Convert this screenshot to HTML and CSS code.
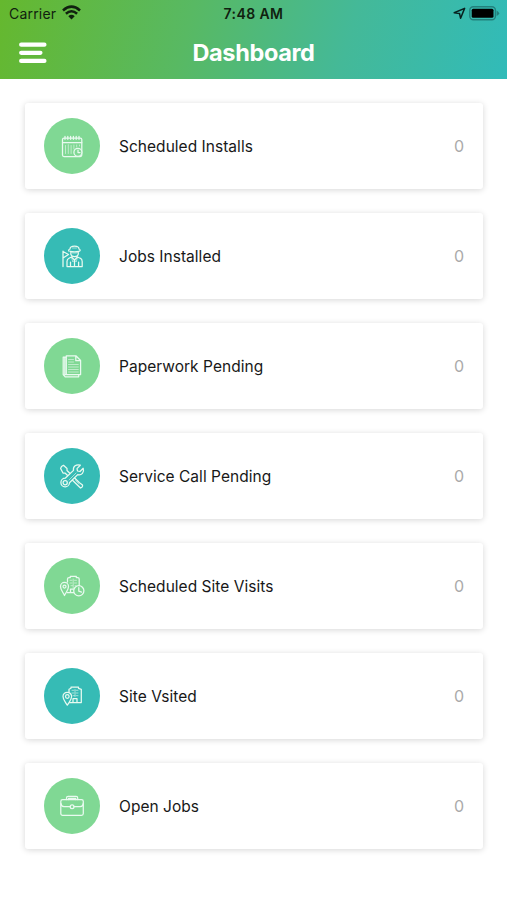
FILE: index.html
```html
<!DOCTYPE html>
<html lang="en">
<head>
<meta charset="utf-8">
<title>Dashboard</title>
<link rel="stylesheet" href="styles.css">
</head>
<body>
<header class="header">
  <div class="status">
    <div class="carrier"><span>Carrier</span>
      <svg width="19" height="15" viewBox="0 0 19 15"><g fill="none" stroke="#10210f" stroke-width="2.6"><path d="M1 5.400Q9.500-2 18 5.400"/><path d="M3.900 8.700q5.600-4.900 11.200 0"/></g><path d="M6.300 11.200q3.200-2.700 6.400 0L9.500 14.400z" fill="#10210f"/></svg>
    </div>
    <div class="time">7:48 AM</div>
    <div class="indicators">
      <svg width="13" height="13" viewBox="0 0 13 13"><path d="M1.200 5.800 11.600 1.400 7.600 11.300 6.500 6.400z" fill="none" stroke="#08211f" stroke-width="1.500" stroke-linejoin="round"/></svg>
      <svg width="31" height="15" viewBox="0 0 31 15"><rect x=".8" y=".8" width="25.600" height="13" rx="3.500" fill="none" stroke="#23817d" stroke-width="1.400"/><rect x="2.700" y="2.800" width="21.800" height="9" rx="1.500" fill="#000"/><path d="M27.600 4.500q5 2.800 0 5.600z" fill="#23817d"/></svg>
    </div>
  </div>
  <div class="titlebar">
    <svg class="menu" width="28" height="22" viewBox="0 0 28 22"><path d="M2.200 2.700h23.200M2.200 10.800h19.200M2.200 18.900h23.200" stroke="#fff" stroke-width="4.300" stroke-linecap="round"/></svg>
    <h1>Dashboard</h1>
  </div>
</header>
<main class="list">
  <section class="card"><div class="icon green"><svg viewBox="0 0 28 28"><rect x="4.500" y="6" width="19.300" height="18.500" rx="1.500"/><path d="M4.500 10.700h19.300M7 4.300v3M9.800 4.300v3M12.600 4.300v3M15.400 4.300v3M18.200 4.300v3M21 4.300v3"/><path class="fine" d="M7.500 13.500v8M10.300 12.700v8.800M13.100 13.500v8M15.900 13v4M18.700 13v2M21.500 13v1"/><circle class="green-fill" cx="19.900" cy="20.300" r="4"/><path d="M20 18v2.500h2"/></svg></div><span class="label">Scheduled Installs</span><span class="count">0</span></section>
  <section class="card"><div class="icon teal"><svg viewBox="0 0 28 28"><path d="M5 9v15.500M5 9.500l5.500 3L5 16M10.800 9q-.5-1.500 1.200-2c0-4 9-4 9 0 1.700.5 1.500 2 0 2.300q-4.500 1-9 0M12.800 9.500v2c0 4 7.500 4 7.500 0v-2M13.500 15l-2.500 1.200q-2 1-2 3v5.300h15.200v-5q0-2.500-2-3.300L19.500 15M13.500 15l3 3 3-3M12.500 24.500V20M20.600 24.500V20M16.500 18v6.500"/><path class="fine" d="M14.500 11h4M14.500 6h4M13.500 15l1.300 5 1.700-2 1.700 2 1.300-5"/></svg></div><span class="label">Jobs Installed</span><span class="count">0</span></section>
  <section class="card"><div class="icon green"><svg viewBox="0 0 28 28"><path d="M8.300 3.800h9.600l4.700 4.700v14H8.300zM17.800 3.800v4.900h4.800M8 5H5.200v17.500l2 2.300h13.500v-2.300M6.800 5v17.500h1.500"/><path class="fine" d="M10.500 7.500h5M10.500 10h5M10.500 12.500h9.800M10.500 15h9.800M10.500 17.500h9.800M10.500 20h9.800"/></svg></div><span class="label">Paperwork Pending</span><span class="count">0</span></section>
  <section class="card"><div class="icon teal"><svg viewBox="0 0 28 28"><path d="M3.500 4.500 5.500 3.300 9 6.500v2l12.500 12.300 3 2.200q.5 2.200-2 3L7 11H5L2.600 6.500z"/><path class="teal-fill" d="M22.300 3.200 19 6.600l.5 2.400 2.500.5 3.200-3.200c1.300 4-1.500 7.200-5.500 6.300l-8.200 8.100a4.300 4.300 0 1 1-4.300-4.500l8.300-7.800c-.8-4 2.800-6.500 6.800-5.200z"/><circle cx="7.200" cy="20.700" r="2.100"/><path class="fine" d="m11 18 7-7M17.500 18.500l3.500 3.600"/></svg></div><span class="label">Service Call Pending</span><span class="count">0</span></section>
  <section class="card"><div class="icon green"><svg viewBox="0 0 28 28"><path d="M9.500 10V7q0-1.500 1.500-1.500h1.300V4.300h6v1.200h1.400q1.500 0 1.500 1.500v7M9 20.500h7M12.500 20v-3h3"/><path class="fine" d="M12 8.300h2M16.500 8.300h2M12 11h2M16.500 11h2M13 13.700h1.500M17 13.700h1M15.200 7v9"/><path class="green-fill" d="M6.500 23.500C4.500 19.500 2.500 17.500 2.500 14.400a4 4 0 0 1 8 0c0 3.100-2 5.100-4 9.100z"/><circle cx="6.500" cy="14.500" r="1.500"/><circle class="green-fill" cx="20.800" cy="18.800" r="5.100"/><path d="M20.800 15.500v3.700l2.800.9"/></svg></div><span class="label">Scheduled Site Visits</span><span class="count">0</span></section>
  <section class="card"><div class="icon teal"><svg viewBox="0 0 28 28"><path d="M11 10V7.200l2-.9V5h7.500v1.300l2.800 1v13.200H11.500M15 20.500v-4h4v4"/><path class="fine" d="M14 8.300h2M18 8.300h2M14 11h2M18 11h2M15 13.700h1.500M18 13.700h2M17 7.500v7"/><path class="teal-fill" d="M9.300 23.200C7 19.500 5 17.800 5 14.600a4.300 4.300 0 0 1 8.600 0c0 3.200-2 4.900-4.300 8.600z"/><circle cx="9.300" cy="14.500" r="1.800"/></svg></div><span class="label">Site Vsited</span><span class="count">0</span></section>
  <section class="card"><div class="icon green"><svg viewBox="0 0 28 28"><rect x="2.800" y="7.700" width="22.500" height="15.600" rx="1.800"/><path d="M8.500 7.500V6q0-1.600 1.600-1.600h8q1.600 0 1.600 1.600v1.500M10.500 7.500V6.300h7.200v1.200M3 11.500q0 3 3 3h6.200M25.200 11.500q0 3-3 3h-6.200"/><circle cx="14.100" cy="14.700" r="1.900"/></svg></div><span class="label">Open Jobs</span><span class="count">0</span></section>
</main>
</body>
</html>
```
FILE: styles.css
```css
* { box-sizing: border-box; }
body { margin: 0; min-height: 100vh; background: #fff; font-family: Inter, "Liberation Sans", sans-serif; color: #181818; }
svg { display: block; }
.header { height: 79px; background: linear-gradient(105deg, #65b82e 0%, #58b963 37%, #44b998 68%, #31bbb9 100%); }
.status { height: 28px; display: grid; grid-template-columns: 1fr auto 1fr; align-items: center; padding: 0 7px 2px 9px; color: #10210f; }
.carrier { display: flex; align-items: center; gap: 6px; font-size: 14px; letter-spacing: .2px; }
.carrier svg { margin-top: -2px; }
.time { font-size: 14px; font-weight: 600; letter-spacing: .4px; margin-right: 2px; }
.indicators { display: flex; justify-content: flex-end; align-items: center; gap: 3px; }
.titlebar { height: 50px; display: grid; grid-template-columns: 28px 1fr 28px; align-items: center; padding: 0 19px; }
h1 { margin: 0; text-align: center; color: #fff; font-size: 23.5px; line-height: 30px; font-weight: 700; letter-spacing: -.35px; }
.list { padding: 24px 24px 50px 25px; display: grid; gap: 24px; }
.card { height: 86px; display: flex; align-items: center; padding: 0 19px; background: #fff; border-radius: 3px; box-shadow: 0 1px 6px rgba(0,0,0,.16); }
.icon { width: 56px; height: 56px; border-radius: 50%; display: grid; place-items: center; margin-right: 19px; }
.green { background: #80d894; }
.teal { background: #36bbb5; }
.icon svg { width: 28px; height: 28px; fill: none; stroke: #e9faf0; stroke-width: 1.25; stroke-linejoin: round; stroke-linecap: round; }
.icon .fine { stroke-width: .8; opacity: .75; }
.icon .green-fill { fill: #80d894; }
.icon .teal-fill { fill: #36bbb5; }
.label { flex: 1; font-size: 15.5px; letter-spacing: .03px; padding-top: 1px; }
.count { font-size: 16px; color: #aaa; }
```
